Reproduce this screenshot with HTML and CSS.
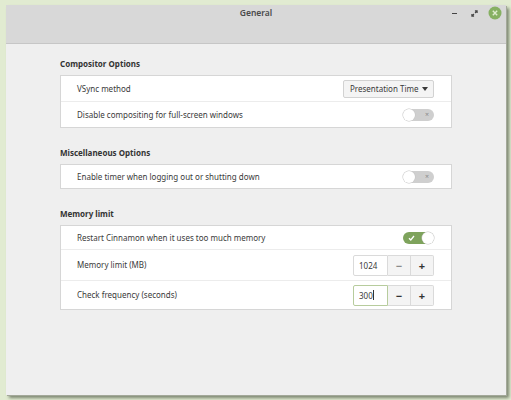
FILE: index.html
```html
<!DOCTYPE html>
<html>
<head>
<meta charset="utf-8">
<link rel="stylesheet" href="styles.css">
</head>
<body>
<div class="window">
  <div class="titlebar">
    <div class="title">General</div>
    <div class="wm-buttons">
      <span class="wm-min"></span>
      <svg class="wm-max" width="7" height="7" viewBox="0 0 8 8"><path d="M4.5 1H7V3.5M7 1L4.6 3.4M3.5 7H1V4.5M1 7L3.4 4.6" stroke="#444" stroke-width="1.3" fill="none"/></svg>
      <svg class="wm-close" width="14" height="14" viewBox="0 0 14 14"><circle cx="7" cy="7" r="6.5" fill="#86b062"/><path d="M4.8 4.8L9.2 9.2M9.2 4.8L4.8 9.2" stroke="#dfeccf" stroke-width="1.4"/></svg>
    </div>
  </div>
  <div class="content">
    <section class="section">
      <h2 class="heading">Compositor Options</h2>
      <div class="frame">
        <div class="row">
          <span class="label">VSync method</span>
          <button class="combo">Presentation Time <span class="arrow"></span></button>
        </div>
        <div class="row">
          <span class="label">Disable compositing for full-screen windows</span>
          <span class="switch off"><span class="knob"></span><span class="mark">×</span></span>
        </div>
      </div>
    </section>
    <section class="section">
      <h2 class="heading">Miscellaneous Options</h2>
      <div class="frame">
        <div class="row row-s">
          <span class="label">Enable timer when logging out or shutting down</span>
          <span class="switch off"><span class="knob"></span><span class="mark">×</span></span>
        </div>
      </div>
    </section>
    <section class="section">
      <h2 class="heading">Memory limit</h2>
      <div class="frame">
        <div class="row row-a">
          <span class="label">Restart Cinnamon when it uses too much memory</span>
          <span class="switch on"><svg class="check" width="7" height="6" viewBox="0 0 7 6"><path d="M1 3.2L2.8 5L6 1" stroke="#fff" stroke-width="1.3" fill="none"/></svg><span class="knob"></span></span>
        </div>
        <div class="row row-b">
          <span class="label">Memory limit (MB)</span>
          <div class="spin">
            <span class="entry">1024</span>
            <span class="sbtn dim">−</span>
            <span class="sbtn">+</span>
          </div>
        </div>
        <div class="row row-c">
          <span class="label">Check frequency (seconds)</span>
          <div class="spin">
            <span class="entry focus">300<span class="caret"></span></span>
            <span class="sbtn">−</span>
            <span class="sbtn">+</span>
          </div>
        </div>
      </div>
    </section>
  </div>
</div>
</body>
</html>
```
FILE: styles.css
```css
html, body {
  margin: 0;
  padding: 0;
}
body {
  width: 511px;
  height: 400px;
  background: #e1ebd1;
  font-family: "Noto Sans", "DejaVu Sans", sans-serif;
  font-size: 8px;
  color: #3a3a3a;
  overflow: hidden;
}
.window {
  margin: 5px 0 0 6px;
  width: 500px;
  height: 390px;
  background: #efefef;
  display: flex;
  flex-direction: column;
  box-shadow: 1px 1px 0 #a3a899, 3px 3px 3px rgba(90, 100, 80, 0.75);
}
.titlebar {
  height: 38px;
  background: #d8d8d8;
  border-bottom: 1px solid #c6c6c6;
  position: relative;
}
.title {
  text-align: center;
  font-weight: 600;
  font-size: 8.5px;
  color: #4a4a4a;
  padding-top: 2px;
  line-height: 12px;
}
.wm-buttons {
  position: absolute;
  right: 4px;
  top: 1px;
  display: flex;
  align-items: center;
  height: 14px;
}
.wm-min {
  display: block;
  width: 5px;
  height: 1.5px;
  background: #444;
  margin-right: 14px;
  margin-top: 1px;
}
.wm-max {
  margin-right: 10px;
}
.content {
  padding: 14px 54px 0 54px;
  display: flex;
  flex-direction: column;
  gap: 19px;
}
.heading {
  margin: 0 0 5px 0;
  font-size: 8px;
  font-weight: 700;
  line-height: 12px;
  color: #333;
}
.frame {
  background: #fff;
  border: 1px solid #d6d6d6;
}
.row {
  display: flex;
  align-items: center;
  justify-content: space-between;
  padding: 0 17px 0 16px;
  height: 25px;
}
.row + .row {
  border-top: 1px solid #ececec;
}
.row-s { height: 23px; }
.row-a { height: 23px; }
.row-b { height: 30px; }
.row-c { height: 28px; }
.label {
  line-height: 12px;
}
.combo {
  font-family: inherit;
  font-size: 8px;
  color: #3a3a3a;
  height: 18px;
  width: 91px;
  padding: 0 0 0 6px;
  background: #f4f4f4;
  border: 1px solid #d2d2d2;
  border-radius: 2px;
  display: flex;
  align-items: center;
  gap: 4px;
}
.arrow {
  width: 0;
  height: 0;
  border-left: 3.5px solid transparent;
  border-right: 3.5px solid transparent;
  border-top: 4px solid #3a3a3a;
}
.switch {
  position: relative;
  width: 31px;
  height: 12px;
  border-radius: 6px;
  display: flex;
  align-items: center;
}
.switch.off {
  background: #cfcfcf;
}
.switch.on {
  background: #7ea35c;
  justify-content: flex-end;
}
.knob {
  width: 12px;
  height: 12px;
  border-radius: 50%;
  background: #fff;
  box-shadow: 0 0 0 0.5px #c4c4c4;
}
.switch.off .mark {
  position: absolute;
  right: 5px;
  top: 0;
  line-height: 11px;
  font-size: 7px;
  color: #8a8a8a;
}
.switch.on .check {
  position: absolute;
  left: 5px;
  top: 3px;
}
.spin {
  display: flex;
  height: 21px;
}
.entry {
  border: 1px solid #dadada;
  border-radius: 2px 0 0 2px;
  background: #fff;
  display: flex;
  align-items: center;
  padding-left: 5px;
  box-sizing: border-box;
  width: 35px;
}
.entry.focus {
  border-color: #b7cc9d;
}
.caret {
  display: inline-block;
  width: 1px;
  height: 10px;
  background: #333;
  margin-left: 0.5px;
}
.sbtn {
  width: 23px;
  box-sizing: border-box;
  background: #f4f4f4;
  border: 1px solid #dadada;
  border-left: none;
  display: flex;
  align-items: center;
  justify-content: center;
  font-size: 11px;
  font-weight: 700;
  color: #333;
}
.sbtn:last-child {
  border-radius: 0 2px 2px 0;
}
.sbtn.dim {
  color: #8c8c8c;
}
```
